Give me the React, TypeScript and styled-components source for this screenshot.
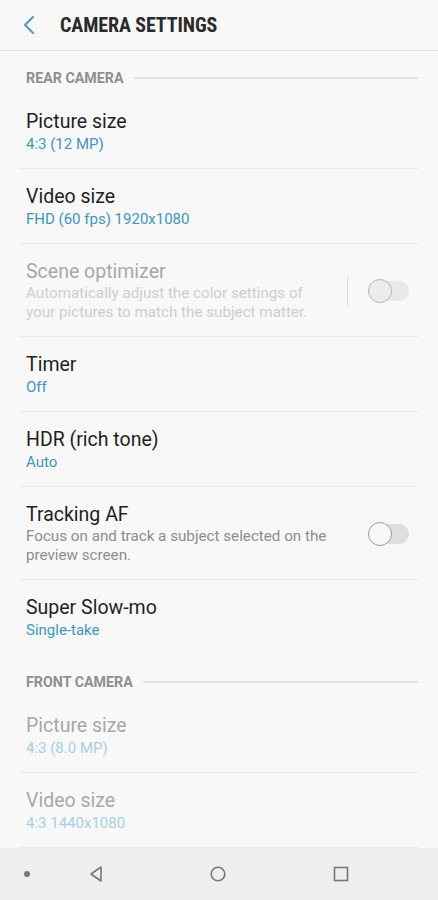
import React from "react";
import styled, { createGlobalStyle } from "styled-components";

const Global = createGlobalStyle`
  html, body { margin: 0; padding: 0; background: #f8f8f8; }
  body { font-family: Roboto, "Noto Sans", sans-serif; -webkit-font-smoothing: antialiased; }
  * { box-sizing: border-box; }
`;

const Screen = styled.div`
  width: 438px;
  height: 900px;
  display: flex;
  flex-direction: column;
  background: #f8f8f8;
  overflow: hidden;
`;

const Header = styled.header`
  height: 51px;
  flex: none;
  display: flex;
  align-items: center;
  border-bottom: 1px solid #e4e4e4;
`;

const BackButton = styled.button`
  width: 60px;
  height: 50px;
  border: 0;
  background: none;
  padding: 0 0 0 22px;
  display: flex;
  align-items: center;
`;

const Title = styled.h1`
  margin: 0;
  font-family: "Roboto Condensed", Roboto, sans-serif;
  font-weight: 700;
  font-size: 20px;
  letter-spacing: -0.1px;
  color: #2b2b2b;
`;

const Content = styled.main`
  flex: 1;
  min-height: 0;
  overflow: hidden;
  display: flex;
  flex-direction: column;
`;

const SectionHeader = styled.div`
  display: flex;
  align-items: flex-start;
  gap: 10px;
  padding: 18px 20px 0 26px;
  height: 43px;
  flex: none;
`;

const SectionLabel = styled.span`
  font-weight: 700;
  font-size: 15px;
  line-height: 18px;
  color: #8f8f8f;
  transform: scaleX(0.95);
  transform-origin: left center;
  margin-right: -5px;
  white-space: nowrap;
`;

const SectionLine = styled.span`
  flex: 1;
  height: 2px;
  margin-top: 8px;
  background: #e2e2e2;
`;

const Row = styled.div<{ $last?: boolean }>`
  display: flex;
  align-items: center;
  flex: none;
  margin: 0 20px;
  padding: 16px 0 14px 6px;
  border-bottom: 1px solid ${(p) => (p.$last ? "transparent" : "#e9e9e9")};
`;

const RowText = styled.div`
  flex: 1;
  display: flex;
  flex-direction: column;
`;

const RowTitle = styled.div<{ $disabled?: boolean }>`
  font-size: 19.5px;
  line-height: 24px;
  color: ${(p) => (p.$disabled ? "#a8a8a8" : "#1f1f1f")};
`;

const RowValue = styled.div<{ $disabled?: boolean }>`
  font-size: 15px;
  line-height: 20px;
  color: ${(p) => (p.$disabled ? "#a6d0e2" : "#3f96bb")};
`;

const RowDesc = styled.div<{ $disabled?: boolean }>`
  font-size: 15.2px;
  line-height: 19px;
  color: ${(p) => (p.$disabled ? "#cdcdcd" : "#8d8d8d")};
  padding-right: 30px;
`;

const VDivider = styled.span`
  width: 1px;
  height: 31px;
  background: #dedede;
  margin-right: 21px;
  flex: none;
`;

const Switch = styled.span<{ $disabled?: boolean }>`
  position: relative;
  width: 40px;
  height: 20px;
  border-radius: 10px;
  background: ${(p) => (p.$disabled ? "#e9e9e9" : "#dedede")};
  margin-right: 9px;
  flex: none;
  &::before {
    content: "";
    position: absolute;
    left: -1px;
    top: -2px;
    width: 24px;
    height: 24px;
    border-radius: 50%;
    background: ${(p) => (p.$disabled ? "#ececec" : "#f8f8f8")};
    border: 1.5px solid ${(p) => (p.$disabled ? "#b5b5b5" : "#9a9a9a")};
    box-sizing: border-box;
  }
`;

const NavBar = styled.nav`
  height: 52px;
  flex: none;
  background: #eeeeee;
  display: grid;
  grid-template-columns: 54px 84px 160px 86px;
  align-items: center;
  justify-items: center;
`;

const NavIcon = styled.svg`
  display: block;
`;

type Item = {
  title: string;
  value?: string;
  desc?: string;
  disabled?: boolean;
  toggle?: boolean;
  separator?: boolean;
  last?: boolean;
};

const rear: Item[] = [
  { title: "Picture size", value: "4:3 (12 MP)" },
  { title: "Video size", value: "FHD (60 fps) 1920x1080" },
  {
    title: "Scene optimizer",
    desc: "Automatically adjust the color settings of your pictures to match the subject matter.",
    disabled: true,
    toggle: true,
    separator: true,
  },
  { title: "Timer", value: "Off" },
  { title: "HDR (rich tone)", value: "Auto" },
  {
    title: "Tracking AF",
    desc: "Focus on and track a subject selected on the preview screen.",
    toggle: true,
  },
  { title: "Super Slow-mo", value: "Single-take", last: true },
];

const front: Item[] = [
  { title: "Picture size", value: "4:3 (8.0 MP)", disabled: true },
  { title: "Video size", value: "4:3 1440x1080", disabled: true },
];

const SettingRow = ({ item }: { item: Item }) => (
  <Row $last={item.last}>
    <RowText>
      <RowTitle $disabled={item.disabled}>{item.title}</RowTitle>
      {item.value && <RowValue $disabled={item.disabled}>{item.value}</RowValue>}
      {item.desc && <RowDesc $disabled={item.disabled}>{item.desc}</RowDesc>}
    </RowText>
    {item.separator && <VDivider />}
    {item.toggle && <Switch $disabled={item.disabled} />}
  </Row>
);

export default function App() {
  return (
    <Screen>
      <Global />
      <Header>
        <BackButton aria-label="Back">
          <svg width="14" height="20" viewBox="0 0 14 20">
            <path d="M11 2 L3 10 L11 18" fill="none" stroke="#4a9bbd" strokeWidth="2" strokeLinecap="round" strokeLinejoin="round" />
          </svg>
        </BackButton>
        <Title>CAMERA SETTINGS</Title>
      </Header>
      <Content>
        <SectionHeader>
          <SectionLabel>REAR CAMERA</SectionLabel>
          <SectionLine />
        </SectionHeader>
        {rear.map((it) => (
          <SettingRow key={it.title} item={it} />
        ))}
        <SectionHeader>
          <SectionLabel>FRONT CAMERA</SectionLabel>
          <SectionLine />
        </SectionHeader>
        {front.map((it) => (
          <SettingRow key={it.title} item={it} />
        ))}
      </Content>
      <NavBar>
        <NavIcon width="8" height="8" viewBox="0 0 8 8">
          <circle cx="4" cy="4" r="3" fill="#777" />
        </NavIcon>
        <NavIcon width="16" height="18" viewBox="0 0 16 18">
          <path d="M13 2 L3 9 L13 16 Z" fill="none" stroke="#777" strokeWidth="1.6" strokeLinejoin="round" />
        </NavIcon>
        <NavIcon width="18" height="18" viewBox="0 0 18 18">
          <circle cx="9" cy="9" r="6.8" fill="none" stroke="#777" strokeWidth="1.6" />
        </NavIcon>
        <NavIcon width="16" height="16" viewBox="0 0 16 16">
          <rect x="1.5" y="1.5" width="13" height="13" fill="none" stroke="#777" strokeWidth="1.6" />
        </NavIcon>
      </NavBar>
    </Screen>
  );
}
